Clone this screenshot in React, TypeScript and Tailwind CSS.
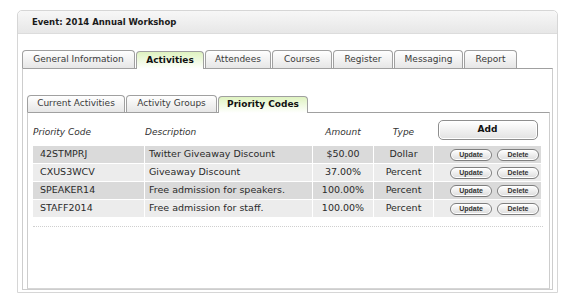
import React from 'react';

const mainTabs = [
  { label: 'General Information', w: 'w-[113px]' },
  { label: 'Activities', w: 'w-[68px]', active: true },
  { label: 'Attendees', w: 'w-[66px]' },
  { label: 'Courses', w: 'w-[60px]' },
  { label: 'Register', w: 'w-[60px]' },
  { label: 'Messaging', w: 'w-[69px]' },
  { label: 'Report', w: 'w-[53px]' },
];

const subTabs = [
  { label: 'Current Activities', w: 'w-[98px]' },
  { label: 'Activity Groups', w: 'w-[91px]' },
  { label: 'Priority Codes', w: 'w-[90px]', active: true },
];

const codes = [
  { code: '42STMPRJ', desc: 'Twitter Giveaway Discount', amount: '$50.00', type: 'Dollar' },
  { code: 'CXUS3WCV', desc: 'Giveaway Discount', amount: '37.00%', type: 'Percent' },
  { code: 'SPEAKER14', desc: 'Free admission for speakers.', amount: '100.00%', type: 'Percent' },
  { code: 'STAFF2014', desc: 'Free admission for staff.', amount: '100.00%', type: 'Percent' },
];

function Tab({ label, w, active, h }: { label: string; w: string; active?: boolean; h: string }) {
  return (
    <div
      className={`${w} ${h} shrink-0 flex items-center justify-center rounded-t-[4px] border border-b-0 border-[#a0a0a0] text-[9px] ${
        active
          ? 'bg-gradient-to-b from-[#dff3c0] to-white font-bold text-[#111] -mb-px relative z-10'
          : 'bg-gradient-to-b from-white to-[#e6e6e6] text-[#3a3a3a]'
      }`}
    >
      {label}
    </div>
  );
}

function SmallButton({ label }: { label: string }) {
  return (
    <button className="w-[42px] h-[12px] rounded-[6px] border border-[#7e7e7e] bg-gradient-to-b from-white to-[#dcdcdc] text-[7px] leading-none font-bold text-[#333] font-['Liberation_Sans',sans-serif] shadow-[inset_0_0_0_1px_#fff]">
      {label}
    </button>
  );
}

export default function App() {
  return (
    <div className="w-[569px] h-[300px] bg-white pt-[10px] pl-[17px] font-['DejaVu_Sans',sans-serif] text-[#333] overflow-hidden">
      <div className="w-[541px] h-[283px] border border-[#d6d6d6] rounded-t-[5px] flex flex-col">
        <div className="h-[23px] shrink-0 flex items-center pl-[14px] bg-gradient-to-b from-[#f7f7f7] to-[#e7e7e7] border-b border-[#dcdcdc] rounded-t-[5px] text-[8.5px] font-bold text-[#1a1a1a]">
          Event: 2014 Annual Workshop
        </div>
        <div className="flex-1 pt-[16px] pl-[4px] pr-[4px] pb-[2px] flex flex-col">
          <div className="flex gap-[1px] items-end">
            {mainTabs.map((t) => (
              <Tab key={t.label} {...t} h="h-[18px]" />
            ))}
          </div>
          <div className="flex-1 border border-[#cdcdcd] border-t-[#a0a0a0] pt-[26px] pl-[4px] pr-[2px] flex flex-col">
            <div className="flex gap-[1px] items-end">
              {subTabs.map((t) => (
                <Tab key={t.label} {...t} h="h-[17px]" />
              ))}
            </div>
            <div className="flex-1 border border-[#cdcdcd] border-t-[#a0a0a0] border-b-[#d6d6d6] pt-[7px] pl-[5px] pr-[6px]">
              <div className="flex items-end gap-[1px] text-[9px] italic text-[#333]">
                <div className="w-[111px] pb-[1px]">Priority Code</div>
                <div className="w-[167px] pb-[1px]">Description</div>
                <div className="w-[60px] pb-[1px] text-center">Amount</div>
                <div className="w-[59px] pb-[1px] text-center">Type</div>
                <div className="w-[107px] flex justify-center not-italic">
                  <button className="w-[100px] h-[20px] rounded-[5px] border border-[#8e8e8e] bg-gradient-to-b from-white to-[#e2e2e2] text-[9px] font-bold text-[#111] shadow-[inset_0_0_0_1px_#fff]">
                    Add
                  </button>
                </div>
              </div>
              <div className="mt-[6px] flex flex-col gap-[1px]">
                {codes.map((r, i) => {
                  const bg = i % 2 === 0 ? 'bg-[#dadada]' : 'bg-[#ececec]';
                  return (
                    <div key={r.code} className="flex gap-[1px] h-[17px] text-[9.5px] text-[#2a2a2a]">
                      <div className={`${bg} w-[111px] pl-[7px] flex items-center`}>{r.code}</div>
                      <div className={`${bg} w-[167px] pl-[4px] flex items-center`}>{r.desc}</div>
                      <div className={`${bg} w-[60px] flex items-center justify-center`}>{r.amount}</div>
                      <div className={`${bg} w-[59px] flex items-center justify-center`}>{r.type}</div>
                      <div className={`${bg} w-[107px] flex items-center justify-end gap-[5px] pr-[2px]`}>
                        <SmallButton label="Update" />
                        <SmallButton label="Delete" />
                      </div>
                    </div>
                  );
                })}
              </div>
              <div className="mt-[9px] border-t border-dotted border-[#cfcfcf]" />
            </div>
          </div>
        </div>
      </div>
    </div>
  );
}
